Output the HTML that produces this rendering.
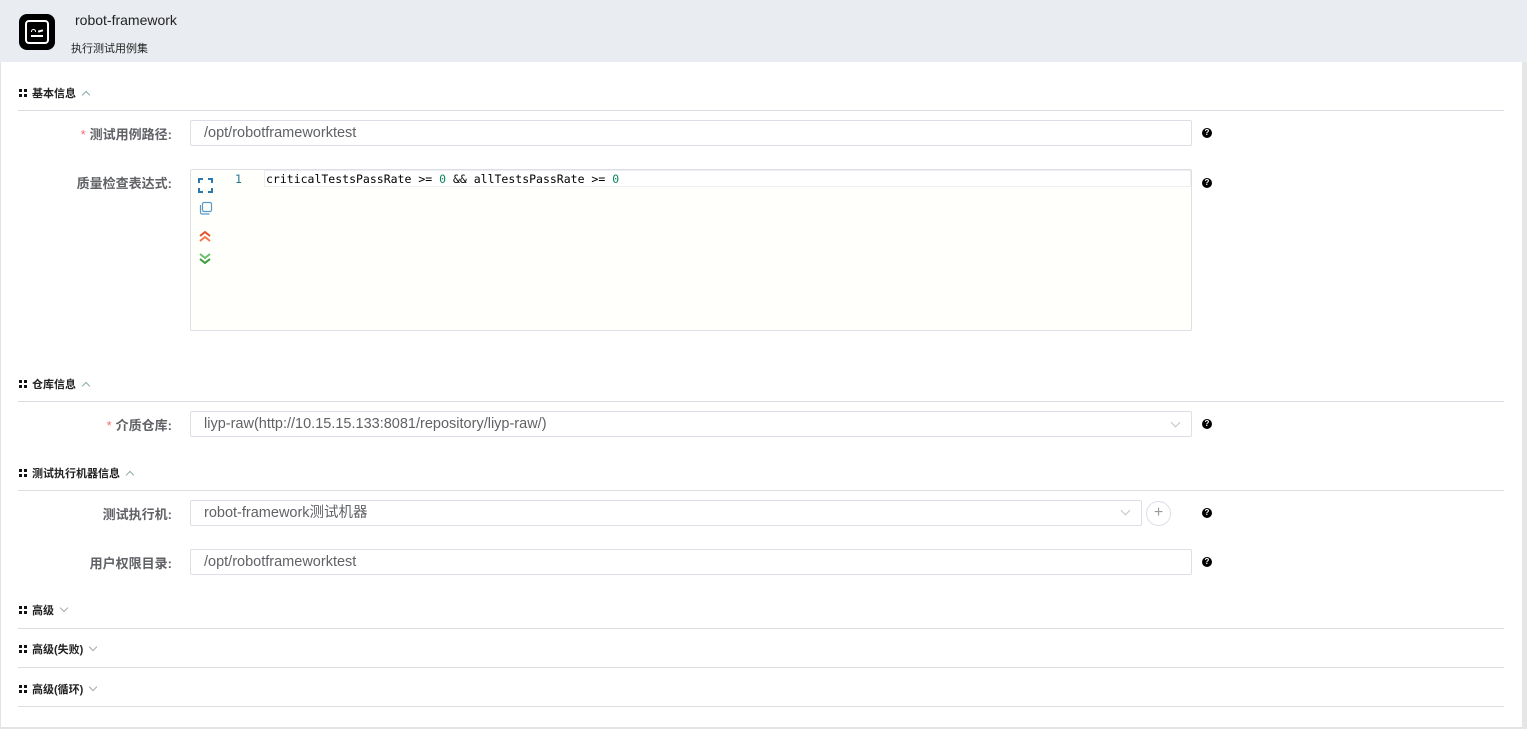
<!DOCTYPE html>
<html><head><meta charset="utf-8"><style>
*{margin:0;padding:0;box-sizing:border-box}
body{width:1532px;height:734px;background:#fff;font-family:"Liberation Sans","Noto Sans CJK SC",sans-serif;position:relative;overflow:hidden;color:#333}
.hdr{position:absolute;left:0;top:0;width:1527px;height:62px;background:#e9ecf1}
.main{position:absolute;left:0;top:62px;width:1522px;height:667px;background:#fff;border-left:1px solid #e3e3e3;border-bottom:2px solid #e3e3e5}
.sb{position:absolute;left:1522px;top:62px;width:5px;height:667px;background:#e6e6e6}
.a{position:absolute}
.sec{position:absolute;left:19px;font-size:11px;font-weight:bold;color:#222;display:flex;align-items:center;height:14px}
.dots{display:inline-grid;grid-template-columns:3px 3px;gap:2px;margin-right:5px}
.dots i{width:3px;height:3px;background:#111;display:block}
.line{position:absolute;left:18px;width:1486px;height:1px;background:#dcdde3}
.lbl{position:absolute;width:172px;text-align:right;font-size:13px;font-weight:bold;color:#606266}
.lbl b{color:#f56c6c;font-weight:normal;margin-right:4px}
.inp{position:absolute;left:190px;width:1002px;height:26px;border:1px solid #dcdfe6;border-radius:2px;font-size:14.5px;color:#606266;padding-left:13px;line-height:24px}
.help{position:absolute;left:1202px;width:10px;height:10px;border-radius:50%;background:#000;color:#fff;font-size:8px;font-weight:bold;text-align:center;line-height:10px}
.car{position:absolute;width:7px;height:7px;border-right:1px solid #999;border-bottom:1px solid #999}
.up{position:relative;display:inline-block;width:6px;height:6px;border-right:1px solid #8aa;border-bottom:1px solid #8aa;transform:rotate(-135deg);top:2px;margin-left:7px}
.dn{position:relative;display:inline-block;width:6px;height:6px;border-right:1px solid #aaa;border-bottom:1px solid #aaa;transform:rotate(45deg);top:-2px;margin-left:7px}
</style></head><body>
<div class="hdr">
 <div class="a" style="left:19px;top:14px;width:36px;height:36px;background:#000;border-radius:8px">
  <div class="a" style="left:6px;top:6px;width:24px;height:24px;border:2.5px solid #fff;border-radius:4px"></div>
  <div class="a" style="left:12px;top:15px;width:5px;height:3px;border:1.5px solid #fff;border-bottom:none;border-radius:3px 3px 0 0"></div>
  <div class="a" style="left:19px;top:16px;width:5px;height:1.5px;background:#fff;transform:rotate(-15deg)"></div>
  <div class="a" style="left:12px;top:21px;width:12px;height:1.5px;background:#fff"></div>
 </div>
 <div class="a" style="left:75px;top:12px;font-size:14px;color:#222">robot-framework</div>
 <div class="a" style="left:71px;top:40px;font-size:11px;color:#222">执行测试用例集</div>
</div>
<div class="main"></div><div class="sb"></div>

<div class="sec" style="top:86px"><span class="dots"><i></i><i></i><i></i><i></i></span>基本信息<span class="up"></span></div>
<div class="line" style="top:110px"></div>
<div class="lbl" style="top:124px"><b>*</b>测试用例路径:</div>
<div class="inp" style="top:120px">/opt/robotframeworktest</div>
<div class="help" style="top:128px">?</div>

<div class="lbl" style="top:173px">质量检查表达式:</div>
<div class="a" style="left:190px;top:169px;width:1002px;height:162px;border:1px solid #dcdfe6;border-radius:2px;background:#fffffc"></div>
<div class="a" style="left:264px;top:170px;width:927px;height:17px;border:1px solid #eee;background:#fff"></div>
<svg class="a" style="left:198px;top:178px" width="16" height="100" viewBox="0 0 16 100">
 <g fill="none" stroke="#2a7ab0" stroke-width="2"><path d="M1 5V1h4M10 1h4v4M14 10v4h-4M5 14H1v-4"/></g>
 <g fill="none" stroke="#5a9ac8" stroke-width="1.2"><rect x="4.5" y="24.5" width="9" height="9" rx="1.5"/><path d="M2.5 27v7.5a1.5 1.5 0 0 0 1.5 1.5h7.5"/></g>
 <g fill="none" stroke-width="2"><path d="M2 58l5-4 5 4" stroke="#e0522a"/><path d="M2 63l5-4 5 4" stroke="#ee7a4a"/>
 <path d="M2 76l5 4 5-4" stroke="#6ac06a"/><path d="M2 81l5 4 5-4" stroke="#3a9a3a"/></g>
</svg>
<div class="a" style="left:235px;top:172px;font-family:'DejaVu Sans Mono',monospace;font-size:11.5px;color:#237893">1</div>
<div class="a" style="left:266px;top:172px;font-family:'DejaVu Sans Mono',monospace;font-size:11.5px;color:#000;white-space:pre">criticalTestsPassRate &gt;= <span style="color:#098658">0</span> &amp;&amp; allTestsPassRate &gt;= <span style="color:#098658">0</span></div>
<div class="help" style="top:178px">?</div>

<div class="sec" style="top:377px"><span class="dots"><i></i><i></i><i></i><i></i></span>仓库信息<span class="up"></span></div>
<div class="line" style="top:401px"></div>
<div class="lbl" style="top:415px"><b>*</b>介质仓库:</div>
<div class="inp" style="top:411px">liyp-raw(http://10.15.15.133:8081/repository/liyp-raw/)</div>
<span class="car" style="left:1172px;top:419px;transform:rotate(45deg);border-color:#c0c4cc"></span>
<div class="help" style="top:419px">?</div>

<div class="sec" style="top:466px"><span class="dots"><i></i><i></i><i></i><i></i></span>测试执行机器信息<span class="up"></span></div>
<div class="line" style="top:490px"></div>
<div class="lbl" style="top:504px">测试执行机:</div>
<div class="inp" style="top:500px;width:952px">robot-framework测试机器</div>
<span class="car" style="left:1122px;top:507px;transform:rotate(45deg);border-color:#c0c4cc"></span>
<div class="a" style="left:1146px;top:501px;width:25px;height:25px;border:1px solid #dcdfe6;border-radius:50%;color:#999;font-size:16px;text-align:center;line-height:22px">+</div>
<div class="help" style="top:508px">?</div>

<div class="lbl" style="top:553px">用户权限目录:</div>
<div class="inp" style="top:549px">/opt/robotframeworktest</div>
<div class="help" style="top:557px">?</div>

<div class="sec" style="top:603px"><span class="dots"><i></i><i></i><i></i><i></i></span>高级<span class="dn"></span></div>
<div class="line" style="top:628px"></div>
<div class="sec" style="top:642px"><span class="dots"><i></i><i></i><i></i><i></i></span>高级(失败)<span class="dn"></span></div>
<div class="line" style="top:667px"></div>
<div class="sec" style="top:682px"><span class="dots"><i></i><i></i><i></i><i></i></span>高级(循环)<span class="dn"></span></div>
<div class="line" style="top:706px"></div>
</body></html>
